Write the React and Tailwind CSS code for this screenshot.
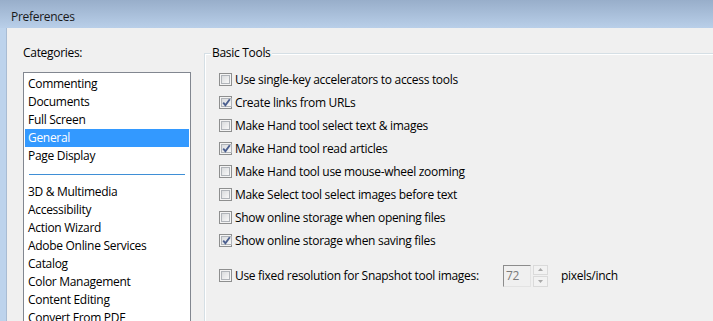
import React from "react";

const categoriesTop = ["Commenting", "Documents", "Full Screen", "General", "Page Display"];
const categoriesBottom = [
  "3D & Multimedia",
  "Accessibility",
  "Action Wizard",
  "Adobe Online Services",
  "Catalog",
  "Color Management",
  "Content Editing",
  "Convert From PDF",
];

const options = [
  ["Use single-key accelerators to access tools", false],
  ["Create links from URLs", true],
  ["Make Hand tool select text & images", false],
  ["Make Hand tool read articles", true],
  ["Make Hand tool use mouse-wheel zooming", false],
  ["Make Select tool select images before text", false],
  ["Show online storage when opening files", false],
  ["Show online storage when saving files", true],
];

function Check({ checked }) {
  return (
    <span className="w-[13px] h-[13px] shrink-0 border border-[#8e8f8f] bg-[#f4f4f4] p-[1px] flex">
      <span className="flex-1 border border-[#b0b4b9] bg-gradient-to-br from-[#dadcde] to-[#f8f8f8] flex items-center justify-center">
        {checked && (
          <svg width="9" height="9" viewBox="0 0 9 9" className="overflow-visible">
            <path d="M1.2 4.6 L3.4 7.2 L7.8 1.2" fill="none" stroke="#4b5f8f" strokeWidth="1.9" strokeLinejoin="miter" />
          </svg>
        )}
      </span>
    </span>
  );
}

function Row({ label, checked }) {
  return (
    <div className="h-[23px] flex items-center pl-[14px] gap-[3px]">
      <Check checked={checked} />
      <span className="whitespace-nowrap">{label}</span>
    </div>
  );
}

export default function App() {
  return (
    <div className="w-[713px] h-[321px] overflow-hidden flex flex-col font-['Open_Sans',sans-serif] text-[12px] leading-[16px] tracking-[-0.3px] text-[#000]">
      <div className="h-[28px] shrink-0 bg-gradient-to-b from-[#98aeca] to-[#b9cfe9] pl-[11px] pt-[9px] text-[#1a1a1a]">
        Preferences
      </div>
      <div className="flex flex-1 min-h-0">
        <div className="w-[7px] shrink-0 bg-[#bdd3ec] border-r border-[#a9bcd3]" />
        <div className="flex-1 bg-[#f0f0f0] flex min-h-0">
          <div className="w-[184px] shrink-0 pl-[16px] pt-[17px] flex flex-col">
            <div>Categories:</div>
            <div className="mt-[11px] w-[168px] border border-[#828790] bg-white p-[1px] pt-[2px] flex flex-col shrink-0">
              {categoriesTop.map((c) =>
                c === "General" ? (
                  <div key={c} className="h-[18px] leading-[18px] pl-[3px] bg-[#3399ff] text-white">
                    {c}
                  </div>
                ) : (
                  <div key={c} className="h-[18px] leading-[18px] pl-[3px]">
                    {c}
                  </div>
                )
              )}
              <div className="h-[18px] flex items-center px-[4px]">
                <div className="h-px flex-1 bg-[#3f8fd6]" />
              </div>
              {categoriesBottom.map((c) => (
                <div key={c} className="h-[18px] leading-[18px] pl-[3px]">
                  {c}
                </div>
              ))}
            </div>
          </div>
          <div className="flex-1 pl-[13px] pt-[17px] flex flex-col min-h-0">
            <fieldset className="flex-1 border-t border-l border-[#d5dfe5] shadow-[inset_1px_1px_0_#ffffff] m-0 p-0 pt-[7px] min-w-0">
              <legend className="ml-[6px] px-[1px] bg-[#f0f0f0]">Basic Tools</legend>
              {options.map(([label, checked]) => (
                <Row key={label} label={label} checked={checked} />
              ))}
              <div className="h-[23px] mt-[12px] flex items-center pl-[14px] gap-[3px]">
                <Check checked={false} />
                <span className="w-[265px] whitespace-nowrap">Use fixed resolution for Snapshot tool images:</span>
                <div className="w-[28px] h-[22px] border border-t-[#8c8c8c] border-l-[#8c8c8c] border-r-[#e3e3e3] border-b-[#e3e3e3] bg-[#f0f0f0] text-[#7a7a7a] pl-[2px] flex items-center">
                  72
                </div>
                <div className="ml-[-1px] w-[15px] h-[22px] flex flex-col gap-px">
                  <div className="flex-1 border border-[#dadada] bg-[#f2f2f2] flex items-center justify-center">
                    <svg width="5" height="3" viewBox="0 0 5 3"><path d="M0 3 L2.5 0 L5 3 Z" fill="#a8a8a8" /></svg>
                  </div>
                  <div className="flex-1 border border-[#dadada] bg-[#f2f2f2] flex items-center justify-center">
                    <svg width="5" height="3" viewBox="0 0 5 3"><path d="M0 0 L2.5 3 L5 0 Z" fill="#a8a8a8" /></svg>
                  </div>
                </div>
                <span className="ml-[10px] whitespace-nowrap">pixels/inch</span>
              </div>
            </fieldset>
          </div>
        </div>
      </div>
    </div>
  );
}
